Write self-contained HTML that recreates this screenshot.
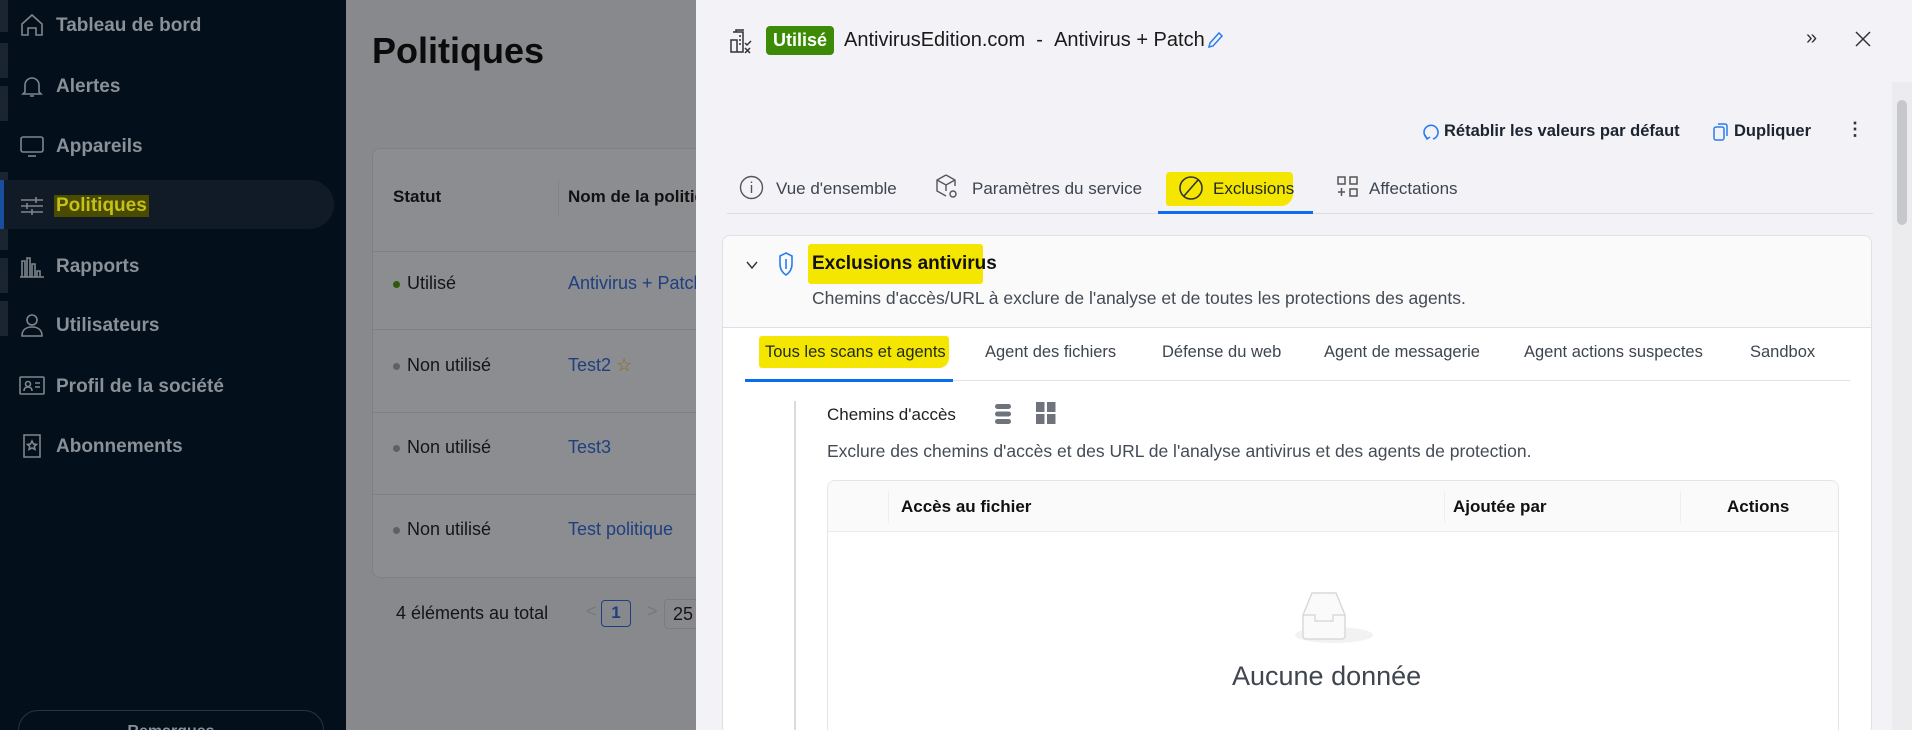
<!DOCTYPE html>
<html><head><meta charset="utf-8"><style>
*{box-sizing:border-box;margin:0;padding:0}
html,body{width:1912px;height:730px;overflow:hidden}
body{font-family:"Liberation Sans",sans-serif;background:#87898c}
#root{position:relative;width:1912px;height:730px;overflow:hidden}
.a{position:absolute;white-space:nowrap}
#side{position:absolute;left:0;top:0;width:346px;height:730px;background:#03101b;overflow:hidden}
.si{position:absolute;left:56px;font-size:19px;font-weight:bold;color:#8a9097}
.stub{position:absolute;left:0;width:8px;background:#1b2530}
.ic{position:absolute;left:18px;width:28px;height:28px}
#main{position:absolute;left:346px;top:0;width:350px;height:730px;background:#88898c;overflow:hidden}
#dr{position:absolute;left:696px;top:0;width:1216px;height:730px;background:#f3f3f7;overflow:hidden}
.tab{font-size:17px;color:#3d4550}
.sub{font-size:16.5px;color:#3d4550}
.hl{background:#f5e600}
</style></head><body><div id="root">
<div id="side">
  <div class="stub" style="top:0;height:32px"></div>
  <div class="stub" style="top:43px;height:35px"></div>
  <div class="stub" style="top:86px;height:35px"></div>
  <div class="stub" style="top:172px;height:35px"></div>
  <div class="stub" style="top:215px;height:35px"></div>
  <div class="stub" style="top:258px;height:35px"></div>
  <div class="stub" style="top:301px;height:35px"></div>
  <div style="position:absolute;left:0;top:180px;width:334px;height:49px;background:#101b27;border-radius:0 25px 25px 0;border-left:4px solid #1a4fa0"></div>
  <svg class="ic" style="top:11px" viewBox="0 0 28 28" fill="none" stroke="#7f858c" stroke-width="1.6"><path d="M4 13L14 4l10 9v11h-6v-7h-8v7H4z"/></svg>
  <div class="si" style="top:15px">Tableau de bord</div>
  <svg class="ic" style="top:72px" viewBox="0 0 28 28" fill="none" stroke="#7f858c" stroke-width="1.6"><path d="M7 20V13a7 7 0 0114 0v7l2 2H5z M12 24h4"/></svg>
  <div class="si" style="top:76px">Alertes</div>
  <svg class="ic" style="top:132px" viewBox="0 0 28 28" fill="none" stroke="#7f858c" stroke-width="1.6"><rect x="3" y="5" width="22" height="15" rx="2"/><path d="M10 24h8"/></svg>
  <div class="si" style="top:136px">Appareils</div>
  <svg class="ic" style="top:192px" viewBox="0 0 28 28" fill="none" stroke="#7f858c" stroke-width="1.6"><path d="M3 8h22M3 14h22M3 20h22M18 5v6M9 11v6M14 17v6"/></svg>
  <div class="si" style="top:195px;background:#4a4a00;color:#c4c21a;padding:0 2px;left:54px">Politiques</div>
  <svg class="ic" style="top:252px" viewBox="0 0 28 28" fill="none" stroke="#7f858c" stroke-width="1.6"><path d="M2 25h24M4 25V9h3v16M9 25V6h3v19M14 25V12h3v13M19 25v-6h3v6"/></svg>
  <div class="si" style="top:256px">Rapports</div>
  <svg class="ic" style="top:311px" viewBox="0 0 28 28" fill="none" stroke="#7f858c" stroke-width="1.6"><circle cx="14" cy="9" r="5"/><path d="M4 25c0-6 4-9 10-9s10 3 10 9z"/></svg>
  <div class="si" style="top:315px">Utilisateurs</div>
  <svg class="ic" style="top:372px" viewBox="0 0 28 28" fill="none" stroke="#7f858c" stroke-width="1.6"><rect x="2" y="5" width="24" height="17" rx="1"/><circle cx="10" cy="12" r="2.5"/><path d="M6 19c0-3 2-4 4-4s4 1 4 4M17 11h5M17 15h5"/></svg>
  <div class="si" style="top:376px">Profil de la société</div>
  <svg class="ic" style="top:432px" viewBox="0 0 28 28" fill="none" stroke="#7f858c" stroke-width="1.6"><path d="M6 3h16v22H6z M14 9l1.5 3 3 .4-2.2 2 .6 3-2.9-1.5-2.9 1.5.6-3-2.2-2 3-.4z"/></svg>
  <div class="si" style="top:436px">Abonnements</div>
  <div style="position:absolute;left:18px;top:710px;width:306px;height:40px;border:1px solid #2a3440;border-radius:20px;text-align:center;font-weight:bold;color:#8a9097;font-size:16px;padding-top:12px">Remarques</div>
</div>
<div id="main">
  <div class="a" style="left:26px;top:30px;font-size:36px;font-weight:bold;color:#0b0b0b">Politiques</div>
  <div style="position:absolute;left:26px;top:148px;width:340px;height:430px;background:#8c8d90;border:1px solid #7e8083;border-radius:8px"></div>
  <div class="a" style="left:47px;top:187px;font-size:17px;font-weight:bold;color:#111">Statut</div>
  <div style="position:absolute;left:212px;top:180px;width:1px;height:36px;background:#818386"></div>
  <div class="a" style="left:222px;top:187px;font-size:17px;font-weight:bold;color:#111">Nom de la politique</div>
  <div style="position:absolute;left:27px;top:251px;width:330px;height:1px;background:#7f8184"></div>
  <div style="position:absolute;left:27px;top:329px;width:330px;height:1px;background:#7f8184"></div>
  <div style="position:absolute;left:27px;top:412px;width:330px;height:1px;background:#7f8184"></div>
  <div style="position:absolute;left:27px;top:494px;width:330px;height:1px;background:#7f8184"></div>
  <div style="position:absolute;left:47px;top:281px;width:7px;height:7px;border-radius:50%;background:#2c5a06"></div>
  <div class="a" style="left:61px;top:273px;font-size:18px;color:#151515">Utilisé</div>
  <div class="a" style="left:222px;top:273px;font-size:18px;color:#1e3f80">Antivirus + Patch</div>
  <div style="position:absolute;left:47px;top:363px;width:7px;height:7px;border-radius:50%;background:#5f6063"></div>
  <div class="a" style="left:61px;top:355px;font-size:18px;color:#151515">Non utilisé</div>
  <div class="a" style="left:222px;top:355px;font-size:18px;color:#1e3f80">Test2 <span style="color:#8a6a10">☆</span></div>
  <div style="position:absolute;left:47px;top:445px;width:7px;height:7px;border-radius:50%;background:#5f6063"></div>
  <div class="a" style="left:61px;top:437px;font-size:18px;color:#151515">Non utilisé</div>
  <div class="a" style="left:222px;top:437px;font-size:18px;color:#1e3f80">Test3</div>
  <div style="position:absolute;left:47px;top:527px;width:7px;height:7px;border-radius:50%;background:#5f6063"></div>
  <div class="a" style="left:61px;top:519px;font-size:18px;color:#151515">Non utilisé</div>
  <div class="a" style="left:222px;top:519px;font-size:18px;color:#1e3f80">Test politique</div>
  <div class="a" style="left:50px;top:603px;font-size:18px;color:#151515">4 éléments au total</div>
  <div class="a" style="left:240px;top:601px;font-size:18px;color:#777">&lt;</div>
  <div style="position:absolute;left:255px;top:600px;width:30px;height:27px;border:1.5px solid #1e3f80;border-radius:4px;color:#1e3f80;font-size:17px;font-weight:bold;text-align:center;line-height:24px">1</div>
  <div class="a" style="left:301px;top:601px;font-size:18px;color:#777">&gt;</div>
  <div style="position:absolute;left:318px;top:599px;width:40px;height:30px;border:1px solid #7a7c7f;border-radius:4px;color:#151515;font-size:18px;padding:4px 0 0 8px">25</div>
</div>
<div id="dr">
  <svg class="a" style="left:32px;top:28px" width="26" height="28" viewBox="0 0 26 28" fill="none" stroke="#333" stroke-width="1.5"><path d="M5 4h10v20H3V12h6v12M8 4V2h8M11 8h2M11 12h2M11 16h2M17 15l2 2 4-4M17 20l5 5M22 20l-5 5"/></svg>
  <div class="a" style="left:70px;top:26px;width:68px;height:29px;background:#3d8a06;border-radius:4px;color:#fff;font-weight:bold;font-size:18px;text-align:center;line-height:29px">Utilisé</div>
  <div class="a" style="left:148px;top:29px;font-size:20px;color:#1a1a1a">AntivirusEdition.com &nbsp;- &nbsp;Antivirus + Patch</div>
  <svg class="a" style="left:510px;top:30px" width="18" height="20" viewBox="0 0 18 20" fill="none" stroke="#2b7cf0" stroke-width="1.5"><path d="M3 17l1-4 9-10 3 3-9 10z"/></svg>
  <div class="a" style="left:1110px;top:27px;font-size:20px;color:#333">»</div>
  <svg class="a" style="left:1159px;top:31px" width="16" height="16" viewBox="0 0 16 16" stroke="#333" stroke-width="1.5"><path d="M1 1l14 14M15 1L1 15"/></svg>
  <div style="position:absolute;left:1196px;top:82px;width:20px;height:648px;background:#ececef"></div>
  <div style="position:absolute;left:1201px;top:100px;width:10px;height:125px;background:#c6c8cc;border-radius:5px"></div>
  <svg class="a" style="left:726px;top:122px" width="18" height="20" viewBox="0 0 18 20" fill="none" stroke="#2b7cf0" stroke-width="1.6"><path d="M5 16a7 7 0 1 1 6 1"/><path d="M3 13l2 4 3-2"/></svg>
  <div class="a" style="left:748px;top:122px;font-size:16.5px;font-weight:bold;color:#1b2430">Rétablir les valeurs par défaut</div>
  <svg class="a" style="left:1016px;top:122px" width="18" height="20" viewBox="0 0 18 20" fill="none" stroke="#2b7cf0" stroke-width="1.5"><rect x="2" y="5" width="10" height="13" rx="2"/><path d="M6 2h7a2 2 0 012 2v10"/></svg>
  <div class="a" style="left:1038px;top:122px;font-size:16.5px;font-weight:bold;color:#1b2430">Dupliquer</div>
  <div class="a" style="left:1150px;top:119px;font-size:18px;font-weight:bold;color:#333">⋮</div>
  <svg class="a" style="left:43px;top:175px" width="25" height="25" viewBox="0 0 25 25" fill="none" stroke="#555" stroke-width="1.4"><circle cx="12.5" cy="12.5" r="11"/><path d="M12.5 10v8M12.5 6.5v1.5"/></svg>
  <div class="a tab" style="left:80px;top:179px">Vue d'ensemble</div>
  <svg class="a" style="left:238px;top:173px" width="26" height="28" viewBox="0 0 26 28" fill="none" stroke="#555" stroke-width="1.4"><path d="M12 2l9 5v6M12 2L3 7v11l9 5M3 7l9 5 9-5M12 12v6"/><circle cx="19" cy="21" r="3"/></svg>
  <div class="a tab" style="left:276px;top:179px">Paramètres du service</div>
  <div class="a hl" style="left:470px;top:172px;width:127px;height:34px;border-radius:4px 4px 12px 3px"></div>
  <svg class="a" style="left:482px;top:175px" width="26" height="26" viewBox="0 0 26 26" fill="none" stroke="#333" stroke-width="1.6"><circle cx="13" cy="13" r="11"/><path d="M6 21L20 5"/></svg>
  <div class="a tab" style="left:517px;top:179px;color:#1f2a1f">Exclusions</div>
  <svg class="a" style="left:640px;top:175px" width="24" height="24" viewBox="0 0 24 24" fill="none" stroke="#555" stroke-width="1.5"><rect x="2" y="2" width="7" height="7"/><rect x="14" y="2" width="7" height="7"/><rect x="14" y="14" width="7" height="7"/><path d="M5.5 13v8M2 17h7"/></svg>
  <div class="a tab" style="left:673px;top:179px">Affectations</div>
  <div style="position:absolute;left:31px;top:213px;width:1146px;height:1px;background:#dcdde2"></div>
  <div style="position:absolute;left:462px;top:211px;width:155px;height:3px;background:#0a6cf0"></div>
  <div style="position:absolute;left:26px;top:235px;width:1150px;height:500px;background:#fff;border:1px solid #dfe0e4;border-radius:8px"></div>
  <div style="position:absolute;left:27px;top:236px;width:1148px;height:92px;background:#fafafa;border-bottom:1px solid #dfe0e4;border-radius:8px 8px 0 0"></div>
  <svg class="a" style="left:49px;top:259px" width="14" height="12" viewBox="0 0 14 12" fill="none" stroke="#333" stroke-width="1.4"><path d="M2 3l5 6 5-6"/></svg>
  <svg class="a" style="left:82px;top:250px" width="16" height="28" viewBox="0 0 16 28" fill="none" stroke="#2b7cf0" stroke-width="1.6"><path d="M8 3l6 3v8c0 6-3 9-6 11-3-2-6-5-6-11V6z M8 9v10"/></svg>
  <div class="a hl" style="left:112px;top:244px;width:175px;height:40px;border-radius:3px"></div>
  <div class="a" style="left:116px;top:253px;font-size:19px;font-weight:bold;color:#111">Exclusions antivirus</div>
  <div class="a" style="left:116px;top:288px;font-size:17.5px;color:#444b55">Chemins d'accès/URL à exclure de l'analyse et de toutes les protections des agents.</div>
  <div class="a hl" style="left:63px;top:336px;width:190px;height:32px;border-radius:3px 3px 10px 3px"></div>
  <div class="a sub" style="left:69px;top:343px;color:#1f2a1f">Tous les scans et agents</div>
  <div class="a sub" style="left:289px;top:343px">Agent des fichiers</div>
  <div class="a sub" style="left:466px;top:343px">Défense du web</div>
  <div class="a sub" style="left:628px;top:343px">Agent de messagerie</div>
  <div class="a sub" style="left:828px;top:343px">Agent actions suspectes</div>
  <div class="a sub" style="left:1054px;top:343px">Sandbox</div>
  <div style="position:absolute;left:49px;top:380px;width:1105px;height:1px;background:#e2e3e6"></div>
  <div style="position:absolute;left:49px;top:379px;width:208px;height:3px;background:#0a6cf0"></div>
  <div style="position:absolute;left:98px;top:401px;width:2px;height:329px;background:#dadbde"></div>
  <div class="a" style="left:131px;top:405px;font-size:17px;color:#222">Chemins d'accès</div>
  <svg class="a" style="left:297px;top:403px" width="20" height="22" viewBox="0 0 20 22" fill="#6f747c"><rect x="2" y="1" width="16" height="5" rx="2.5"/><rect x="2" y="8.5" width="16" height="5" rx="2.5"/><rect x="2" y="16" width="16" height="5" rx="2.5"/></svg>
  <svg class="a" style="left:340px;top:402px" width="20" height="22" viewBox="0 0 20 22" fill="#6f747c"><rect x="0" y="0" width="8.5" height="10"/><rect x="11" y="0" width="8.5" height="10"/><rect x="0" y="12" width="8.5" height="10"/><rect x="11" y="12" width="8.5" height="10"/></svg>
  <div class="a" style="left:131px;top:441px;font-size:17.5px;color:#444b55">Exclure des chemins d'accès et des URL de l'analyse antivirus et des agents de protection.</div>
  <div style="position:absolute;left:131px;top:480px;width:1012px;height:260px;border:1px solid #e4e5e8;border-radius:8px;background:#fff"></div>
  <div style="position:absolute;left:132px;top:481px;width:1010px;height:51px;background:#fafafa;border-bottom:1px solid #ececee;border-radius:8px 8px 0 0"></div>
  <div style="position:absolute;left:192px;top:491px;width:1px;height:32px;background:#eceef0"></div>
  <div style="position:absolute;left:748px;top:491px;width:1px;height:32px;background:#eceef0"></div>
  <div style="position:absolute;left:984px;top:491px;width:1px;height:32px;background:#eceef0"></div>
  <div class="a" style="left:205px;top:497px;font-size:17px;font-weight:bold;color:#111">Accès au fichier</div>
  <div class="a" style="left:757px;top:497px;font-size:17px;font-weight:bold;color:#111">Ajoutée par</div>
  <div class="a" style="left:1031px;top:497px;font-size:17px;font-weight:bold;color:#111">Actions</div>
  <svg class="a" style="left:598px;top:590px" width="80" height="55" viewBox="0 0 80 55"><ellipse cx="40" cy="45" rx="39" ry="8" fill="#f2f2f2"/><path d="M9 25l9-22h24l9 22v21a3 3 0 01-3 3H12a3 3 0 01-3-3z" fill="#fafafa" stroke="#d9d9d9" stroke-width="1.5"/><path d="M9 25h12v6h18v-6h12" fill="none" stroke="#d9d9d9" stroke-width="1.5"/></svg>
  <div class="a" style="left:536px;top:661px;font-size:27px;color:#3f4650">Aucune donnée</div>
</div>
</div></body></html>
